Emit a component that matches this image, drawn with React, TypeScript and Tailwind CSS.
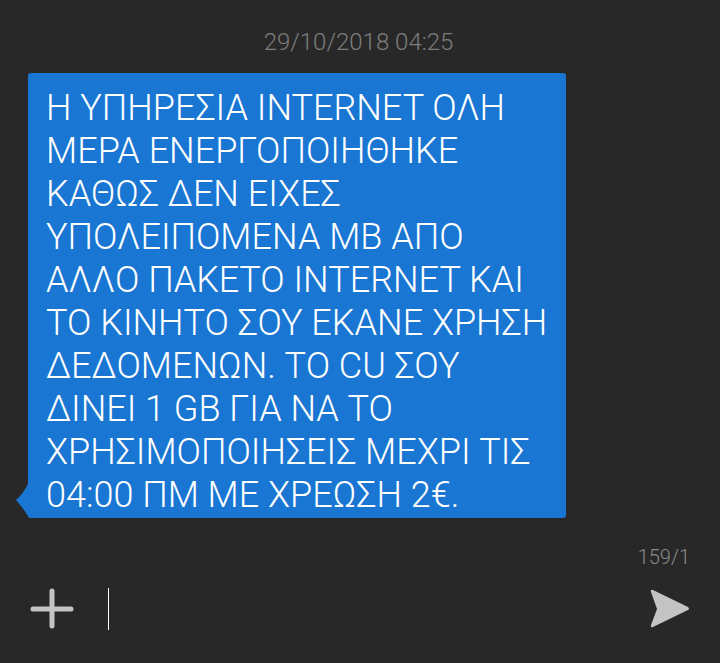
import React from 'react';

const lines = [
  'Η ΥΠΗΡΕΣΙΑ INTERNET ΟΛΗ',
  'ΜΕΡΑ ΕΝΕΡΓΟΠΟΙΗΘΗΚΕ',
  'ΚΑΘΩΣ ΔΕΝ ΕΙΧΕΣ',
  'ΥΠΟΛΕΙΠΟΜΕΝΑ ΜΒ ΑΠΟ',
  'ΑΛΛΟ ΠΑΚΕΤΟ INTERNET ΚΑΙ',
  'ΤΟ ΚΙΝΗΤΟ ΣΟΥ ΕΚΑΝΕ ΧΡΗΣΗ',
  'ΔΕΔΟΜΕΝΩΝ. ΤΟ CU ΣΟΥ',
  'ΔΙΝΕΙ 1 GB ΓΙΑ ΝΑ ΤΟ',
  'ΧΡΗΣΙΜΟΠΟΙΗΣΕΙΣ ΜΕΧΡΙ ΤΙΣ',
  '04:00 ΠΜ ΜΕ ΧΡΕΩΣΗ 2€.',
];

const App: React.FC = () => {
  return (
    <div className="w-[720px] h-[663px] bg-[#282828] flex flex-col font-['Roboto',sans-serif] font-light overflow-hidden">
      <div className="pt-[26px] pr-[3px] text-center text-[24px] leading-[32px] text-[#7d7d7d]">29/10/2018 04:25</div>

      <div className="mt-[15px] ml-[28px] relative w-[538px]">
        <div className="bg-[#1976d2] rounded-[3px] pl-[18px] pt-[14px] pb-[1px] text-white text-[36px] leading-[43px]">
          {lines.map((l) => (
            <div key={l} className="whitespace-nowrap">{l}</div>
          ))}
        </div>
        <svg className="absolute left-[-13px] bottom-[0px]" width="14" height="36" viewBox="0 0 14 36">
          <path d="M14 0 L13 2 Q8 12 1 18 Q8 26 13 34 L14 36 Z" fill="#1976d2" />
        </svg>
      </div>

      <div className="mt-[25px] pr-[30px] text-right text-[20px] leading-[28px] text-[#8a8a8a]">159/1</div>

      <div className="mt-[13px] flex items-center h-[50px]">
        <svg className="ml-[30px]" width="44" height="42" viewBox="0 0 44 42">
          <path d="M22 3 V38 M3 21 H41" stroke="#c4c4c4" strokeWidth="5" strokeLinecap="round" />
        </svg>
        <div className="ml-[34px] w-px h-[42px] bg-white" />
        <div className="flex-1" />
        <svg className="mr-[29px]" width="44" height="42" viewBox="0 0 44 42">
          <path d="M4 4 Q3 1 6 2 L41 19 Q43 21 41 22 L6 39 Q3 40 4 37 L10 21 Z" fill="#c4c4c4" strokeLinejoin="round" />
        </svg>
      </div>
    </div>
  );
};

export default App;
